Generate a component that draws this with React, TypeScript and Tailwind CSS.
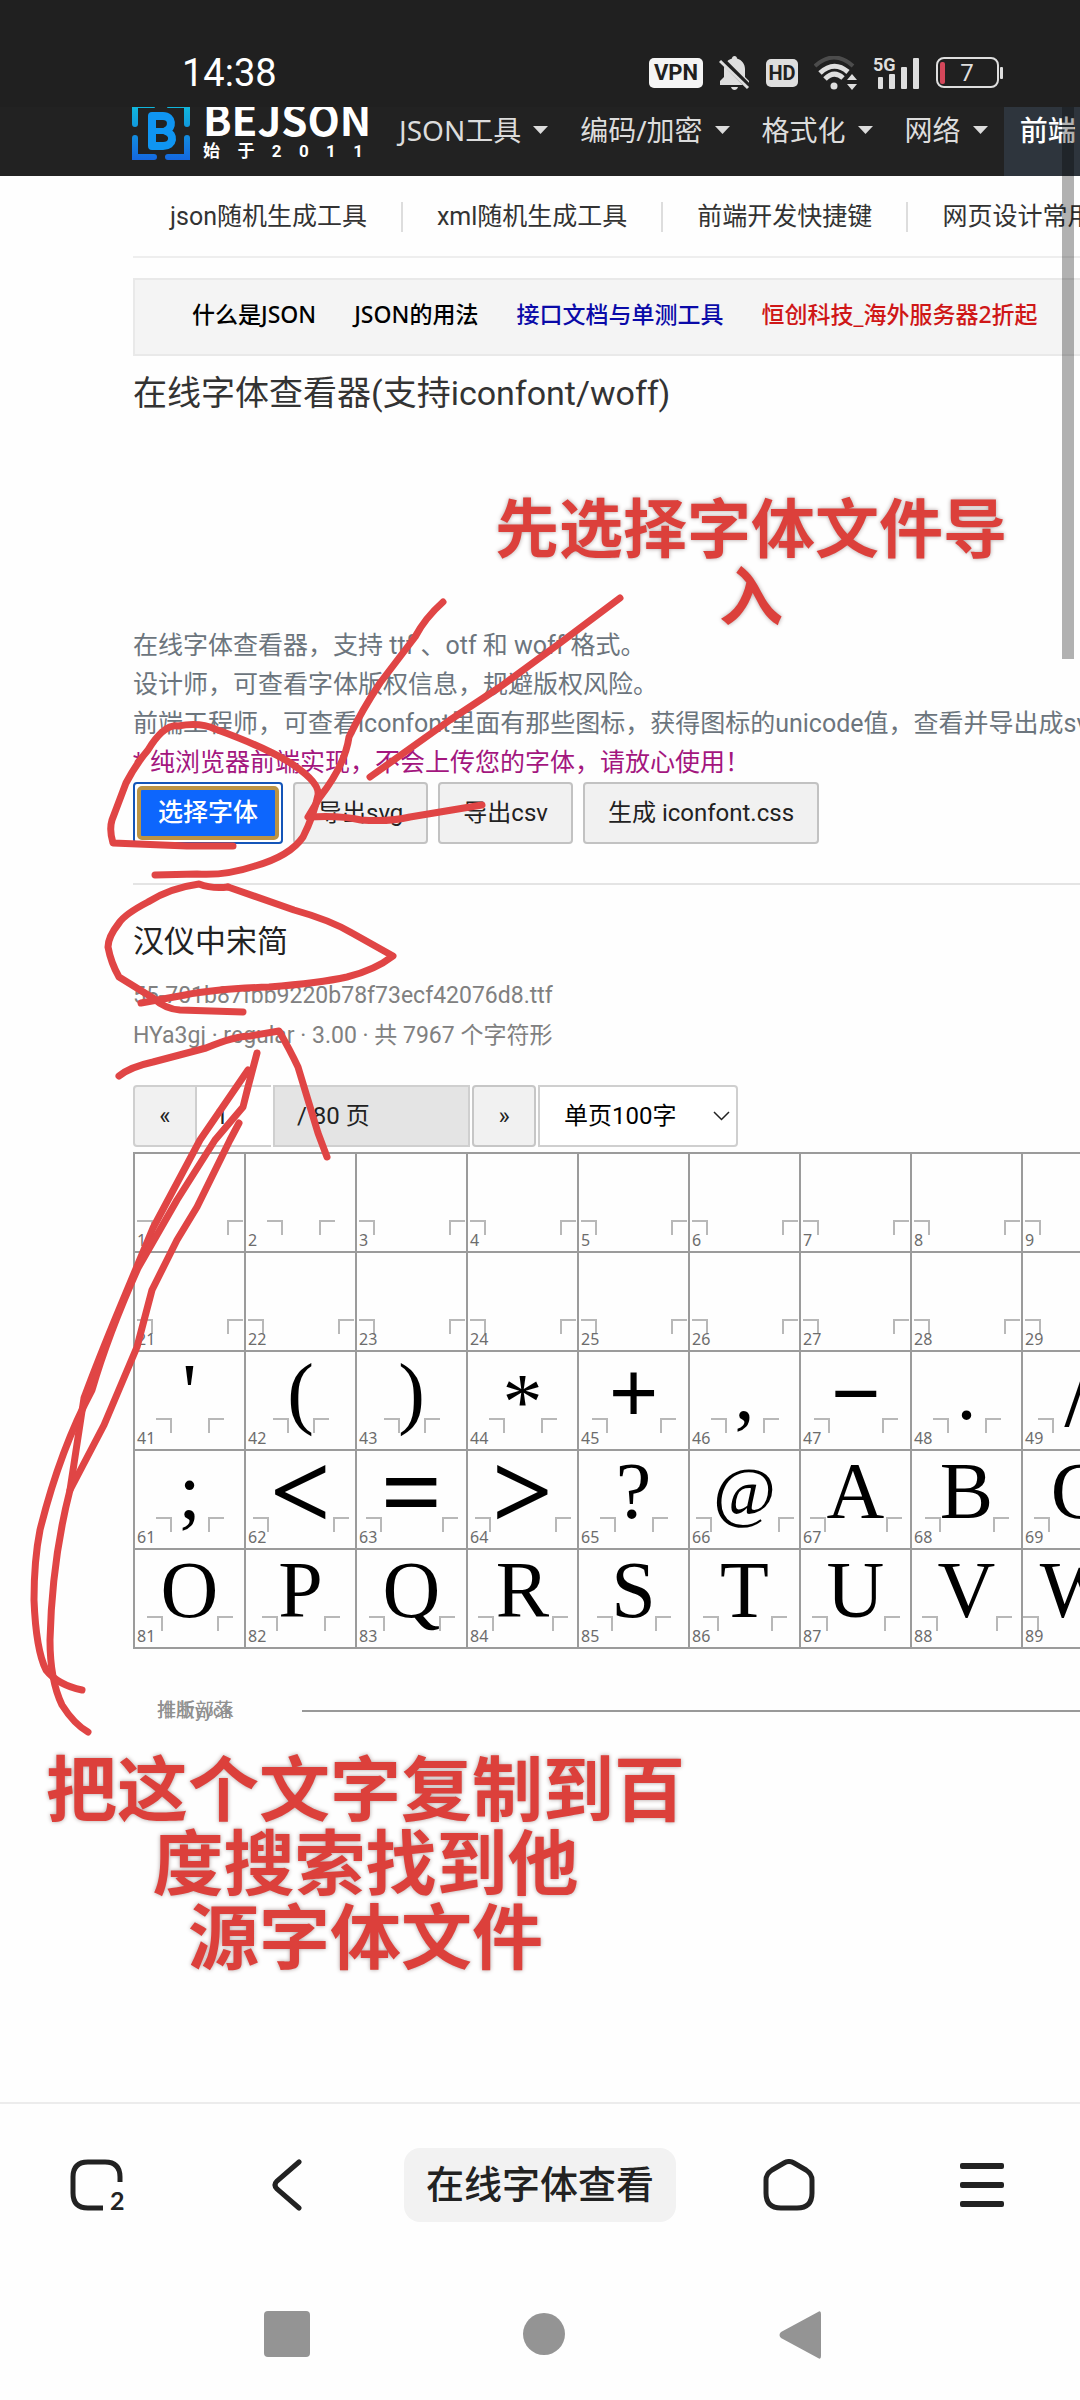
import type { ReactNode } from "react";

interface Glyph {
  id: number;
  char: string;
  /* half of the advance width, where the side marks sit */
  half: number;
  style?: "math" | "wide" | "slash" | "star" | "at";
}

const NAV = ["JSON工具", "编码/加密", "格式化", "网络"];
const SUB_NAV = ["json随机生成工具", "xml随机生成工具", "前端开发快捷键", "网页设计常用色"];

const ROWS: Glyph[][] = [
  [1, 2, 3, 4, 5, 6, 7, 8, 9].map((id) => ({ id, char: "", half: id === 2 ? 19 : 38 })),
  [21, 22, 23, 24, 25, 26, 27, 28, 29].map((id) => ({ id, char: "", half: 38 })),
  [
    { id: 41, char: "'", half: 19 },
    { id: 42, char: "(", half: 13 },
    { id: 43, char: ")", half: 13 },
    { id: 44, char: "*", half: 19, style: "star" },
    { id: 45, char: "+", half: 27, style: "math" },
    { id: 46, char: ",", half: 19 },
    { id: 47, char: "−", half: 27, style: "math" },
    { id: 48, char: ".", half: 19 },
    { id: 49, char: "/", half: 25, style: "slash" },
  ],
  [
    { id: 61, char: ";", half: 19 },
    { id: 62, char: "<", half: 33, style: "wide" },
    { id: 63, char: "=", half: 31, style: "wide" },
    { id: 64, char: ">", half: 33, style: "wide" },
    { id: 65, char: "?", half: 19 },
    { id: 66, char: "@", half: 34, style: "at" },
    { id: 67, char: "A", half: 31 },
    { id: 68, char: "B", half: 27 },
    { id: 69, char: "C", half: 29 },
  ],
  [
    { id: 81, char: "O", half: 28 },
    { id: 82, char: "P", half: 24 },
    { id: 83, char: "Q", half: 28 },
    { id: 84, char: "R", half: 30 },
    { id: 85, char: "S", half: 22 },
    { id: 86, char: "T", half: 27 },
    { id: 87, char: "U", half: 29 },
    { id: 88, char: "V", half: 30 },
    { id: 89, char: "W", half: 40 },
  ],
];

const GLYPH_STYLES = {
  text: "text-[80px] leading-[80px]",
  math: "text-[88px] leading-[84px] font-bold",
  wide: "text-[108px] leading-[82px] font-bold",
  slash: "text-[96px] leading-[84px]",
  star: "text-[80px] leading-[100px]",
  at: "text-[68px] leading-[80px]",
};

const STROKES = [
  "M443 602 Q425 618 415 637 L380 683 Q362 710 349 737 Q345 765 320 797 L308 817 Q340 815 361 820 Q390 822 410 817 L482 805",
  "M620 598 L560 643 L500 687 L450 720 L370 777",
  "M233 846 L187 846 L113 843 Q109 830 112 820 L126 783 Q136 764 148 750 Q164 724 178 726 Q200 722 215 729 Q262 746 289 762 Q320 782 318 795 Q314 815 303 837 Q290 856 255 866 Q225 876 197 874 L155 875",
  "M228 887 Q212 889 199 884 Q170 888 148 902 Q125 914 119 923 Q108 937 108 947 Q111 963 119 977 L153 998 Q165 1009 180 1010 L243 1012",
  "M228 887 Q262 899 294 910 Q330 920 352 933 L393 956 Q375 970 347 977 Q320 983 269 987 Q215 989 185 995 L141 1003",
  "M119 1076 Q130 1067 153 1062 L206 1048 Q235 1036 250 1036 L279 1031 Q290 1050 298 1067 L318 1133 L327 1157",
  "M248 1070 L200 1140 L153 1228 L120 1307 Q98 1360 84 1398 L70 1490",
  "M257 1053 L248 1087 L243 1107 L215 1140 L177 1200 L138 1268 Q108 1335 92 1390 Q60 1450 40 1530 Q34 1560 34 1600 Q36 1650 46 1670 Q58 1685 82 1690",
  "M239 1123 L230 1140 L197 1207 L177 1240 L152 1290 L137 1347 L104 1425 L70 1490 Q52 1560 50 1640 Q50 1680 62 1705 Q74 1724 88 1732",
];

function Caret() {
  return (
    <svg width="15" height="8" viewBox="0 0 15 8" fill="#dcdcdc" aria-hidden="true">
      <path d="M0 0h15L7.500 8z" />
    </svg>
  );
}

function StatusBar() {
  return (
    <div className="flex h-[107px] items-center justify-between bg-[#202020] pt-[38px] pl-[182px] pr-[77px]">
      <span className="font-['Roboto',sans-serif] text-[38px] leading-none text-white">14:38</span>
      <div className="flex items-center gap-4 text-[#dedede]">
        <span className="flex h-[30px] w-[54px] items-center justify-center rounded-[5px] bg-[#f4f4f4] font-['Roboto',sans-serif] text-[22px] leading-none font-bold text-[#202020]">
          VPN
        </span>
        <svg width="31" height="34" viewBox="0 0 31 34" aria-hidden="true">
          <path d="M15.500 0c1.500 0 2.500 1 2.500 2.500C23 4 26 8 26 13v8l4 4v4H1v-4l4-4v-8C5 8 8 4 13 2.500 13 1 14 0 15.500 0z" fill="#dedede" />
          <path d="M12 31h7c-.5 2-2 3-3.500 3S12.500 33 12 31z" fill="#dedede" />
          <path d="M0 1l31 31" stroke="#202020" strokeWidth="6" />
          <path d="M1 5l28 27" stroke="#dedede" strokeWidth="3" />
        </svg>
        <span className="flex h-7 w-8 items-center justify-center rounded-[5px] bg-[#dedede] font-['Roboto',sans-serif] text-[20px] leading-none font-bold text-[#202020]">
          HD
        </span>
        <svg width="43" height="34" viewBox="0 0 43 34" fill="none" aria-hidden="true">
          <path d="M1 10Q20-7 39 10" stroke="#4c4c4c" strokeWidth="4" />
          <path d="M6 17Q20 4 34 16" stroke="#dedede" strokeWidth="5" />
          <path d="M11 23Q20 14 29 22" stroke="#dedede" strokeWidth="5" />
          <circle cx="20" cy="30" r="3.500" fill="#dedede" />
          <path d="M33 24l5-6 5 6zM33 28l5 6 5-6z" fill="#dedede" />
        </svg>
        <svg width="47" height="34" viewBox="0 0 47 34" fill="#dedede" aria-hidden="true">
          <text x="0" y="15" fontSize="18" fontWeight="700" fontFamily="Roboto">5G</text>
          <rect x="5" y="21" width="5" height="12" rx="1" />
          <rect x="16" y="18" width="6" height="15" rx="1" />
          <rect x="28" y="11" width="6" height="22" rx="1" />
          <rect x="40" y="2" width="6" height="31" rx="1" />
        </svg>
        <svg width="67" height="32" viewBox="0 0 67 32" aria-hidden="true">
          <rect x="1" y="1" width="61" height="29" rx="7" fill="none" stroke="#dedede" strokeWidth="2" />
          <rect x="4" y="5" width="5" height="22" rx="2" fill="#d4475a" />
          <rect x="64" y="10" width="3" height="12" rx="1" fill="#dedede" />
          <text x="31" y="24" textAnchor="middle" fontSize="24" fill="#dedede" fontFamily="Roboto">7</text>
        </svg>
      </div>
    </div>
  );
}

function Logo() {
  return (
    <a href="#" className="flex w-[267px] shrink-0 gap-[13px] text-white">
      <svg width="58" height="53" viewBox="0 0 58 53" fill="none" aria-hidden="true">
        <defs>
          <linearGradient id="logo" x1="0" y1="0" x2="0" y2="53" gradientUnits="userSpaceOnUse">
            <stop offset="0" stopColor="#10b7dc" />
            <stop offset="1" stopColor="#1467e0" />
          </linearGradient>
        </defs>
        <g stroke="url(#logo)" strokeWidth="6" strokeLinecap="round">
          <path d="M3-2V17M55-2V17M3 31V50H22M55 31V50H36" />
          <path d="M0 0H22M36 0H58" strokeWidth="2" />
        </g>
        <path d="M20 9h11c10 0 10 12 3 15 9 3 8 15-3 15H20z" stroke="#0f95f2" strokeWidth="8" strokeLinejoin="round" />
        <path d="M20 24h13" stroke="#0f95f2" strokeWidth="6" />
      </svg>
      <span className="flex w-40 flex-col">
        <span className="-mt-3 font-['Noto_Sans_CJK_SC',sans-serif] text-[42px] leading-[45px] font-bold">BEJSON</span>
        <span className="flex justify-between text-[17px] leading-[22px] font-bold">
          {["始", "于", "2", "0", "1", "1"].map((c, i) => (
            <span key={i}>{c}</span>
          ))}
        </span>
      </span>
    </a>
  );
}

function GlyphCell({ glyph }: { glyph: Glyph }) {
  const left = 55 - glyph.half;
  const right = 55 + glyph.half;
  return (
    <td className="border-2 border-[#9b9b9b] p-0">
      <div className="relative h-[97px] w-[109px] text-center">
        <svg className="absolute inset-0" width="109" height="97" fill="none" stroke="#b8b8b8" strokeWidth="2" aria-hidden="true">
          <path d={`M${left - 15} 67H${left}V81M${right + 15} 67H${right}V81`} />
        </svg>
        <span className={`relative block font-['Liberation_Serif',serif] text-black ${GLYPH_STYLES[glyph.style ?? "text"]}`}>
          {glyph.char}
        </span>
        <span className="absolute bottom-[2px] left-[2px] font-['Noto_Sans',sans-serif] text-[16px] leading-[18px] text-[#6c6c6c]">
          {glyph.id}
        </span>
      </div>
    </td>
  );
}

function PlainButton({ children }: { children: ReactNode }) {
  return (
    <button className="h-[62px] rounded-[4px] border-2 border-[#c2c2c2] bg-[#f1f1f1] px-[23px] text-[24px] text-[#222]">
      {children}
    </button>
  );
}

function FontViewer() {
  return (
    <main className="pl-[133px] whitespace-nowrap text-[#333]">
      <nav className="flex h-[82px] items-center border-b-2 border-[#eee] pt-[2px] pl-[3px] text-[25px]">
        {SUB_NAV.map((label, i) => (
          <a
            key={label}
            href="#"
            className={`h-[30px] shrink-0 px-[34px] leading-[30px] ${i > 0 ? "border-l-2 border-[#ddd]" : ""}`}
          >
            {label}
          </a>
        ))}
      </nav>

      <div className="mt-5 flex h-[78px] items-center gap-[38px] border-y-2 border-l-2 border-[#e9e9e9] bg-[#f4f4f4] pb-[6px] pl-[57px] font-['Noto_Sans','Noto_Sans_CJK_SC',sans-serif] text-[23px] font-medium text-black">
        <a href="#">什么是JSON</a>
        <a href="#">JSON的用法</a>
        <a href="#" className="text-[#0a0aa8]">接口文档与单测工具</a>
        <a href="#" className="text-[#cf1717]">恒创科技_海外服务器2折起</a>
      </div>

      <h1 className="mt-3 text-[34px] leading-[50px]">在线字体查看器(支持iconfont/woff)</h1>

      <div className="mt-[208px] text-[25px] leading-[39px] text-[#6c757d]">
        <p>在线字体查看器，支持 ttf 、otf 和 woff 格式。</p>
        <p>设计师，可查看字体版权信息，规避版权风险。</p>
        <p>前端工程师，可查看iconfont里面有那些图标，获得图标的unicode值，查看并导出成svg、css</p>
        <p className="text-[#a3167e]">* 纯浏览器前端实现，不会上传您的字体，请放心使用！</p>
      </div>

      <div className="flex gap-[10px]">
        <button className="h-[62px] rounded-[4px] border-2 border-[#1455b8] bg-white p-[2px] text-[25px] text-white">
          <span className="flex h-full items-center rounded-[5px] border-4 border-[#bb9345] bg-[#0d66fd] px-[17px] font-medium">选择字体</span>
        </button>
        <PlainButton>导出svg</PlainButton>
        <PlainButton>导出csv</PlainButton>
        <PlainButton>生成 iconfont.css</PlainButton>
      </div>

      <hr className="mt-[39px] border-t-2 border-[#e4e4e4]" />

      <h2 className="mt-[34px] text-[31px] leading-[46px] text-[#222]">汉仪中宋简</h2>
      <div className="mt-[11px] text-[23px] leading-[40px] text-[#808080]">
        <p>55-701b87fbb9220b78f73ecf42076d8.ttf</p>
        <p>HYa3gj · regular · 3.00 · 共 7967 个字符形</p>
      </div>

      <form className="mt-[29px] flex h-[62px] text-[24px] text-[#222]">
        <button type="button" className="w-[64px] rounded-l-[4px] border-2 border-[#cfcfcf] bg-[#f1f1f1]">«</button>
        <input aria-label="页码" defaultValue="1" className="w-[74px] border-y-2 border-[#cfcfcf] bg-white px-[18px]" />
        <span className="ml-[2px] flex w-[197px] items-center border-2 border-[#cfcfcf] bg-[#e4e4e4] px-[22px]">/ 80 页</span>
        <button type="button" className="ml-[2px] w-[64px] rounded-[4px] border-2 border-[#c6c6c6] bg-[#f1f1f1]">»</button>
        <span className="relative ml-[2px] w-[200px]">
          <select aria-label="每页字数" className="h-full w-full appearance-none rounded-r-[4px] border-2 border-[#cfcfcf] bg-white px-6 text-black">
            <option>单页100字</option>
          </select>
          <svg className="absolute top-[26px] right-2" width="17" height="10" viewBox="0 0 17 10" fill="none" stroke="#222" strokeWidth="1.500" aria-hidden="true">
            <path d="M1 1l7.500 7.500L16 1" />
          </svg>
        </span>
      </form>

      <table className="mt-[5px] border-collapse">
        <tbody>
          {ROWS.map((row) => (
            <tr key={row[0].id}>
              {row.map((glyph) => (
                <GlyphCell key={glyph.id} glyph={glyph} />
              ))}
            </tr>
          ))}
        </tbody>
      </table>

      <div className="mt-12 flex items-center pl-6 text-[19px] leading-7 text-[#909090]">
        <span className="relative w-[145px] shrink-0">
          排版部落
          <span className="absolute top-0 left-0" aria-hidden="true">推断yyok</span>
        </span>
        <span className="h-[2px] flex-1 bg-[#999]" />
      </div>
    </main>
  );
}

function BrowserBar() {
  return (
    <nav className="grid h-[168px] grid-cols-[194fr_185fr_322fr_176fr_203fr] items-start justify-items-center border-t-2 border-[#ececec] pt-[44px] text-[#222]">
      <button aria-label="标签页" className="flex h-[74px] items-center">
        <svg width="54" height="52" viewBox="0 0 54 52" fill="none" stroke="#222" strokeWidth="5" aria-hidden="true">
          <path d="M50 23V18Q50 3 35 3H18Q3 3 3 18V34Q3 49 18 49H33" />
          <text x="40" y="51" fontSize="25" fontWeight="700" fontFamily="Lato" fill="#222" stroke="none">2</text>
        </svg>
      </button>
      <button aria-label="后退" className="flex h-[74px] items-center">
        <svg width="30" height="52" viewBox="0 0 30 52" fill="none" stroke="#222" strokeWidth="5" strokeLinecap="round" aria-hidden="true">
          <path d="M27 3L5 22Q1 26 5 30L27 49" />
        </svg>
      </button>
      <button className="h-[74px] rounded-[16px] bg-[#f2f2f2] px-[22px] text-[38px] font-medium">在线字体查看</button>
      <button aria-label="主页" className="flex h-[74px] items-center">
        <svg width="52" height="52" viewBox="0 0 52 52" fill="none" stroke="#222" strokeWidth="5" strokeLinejoin="round" aria-hidden="true">
          <path d="M21 4Q26 1 31 4L43 11Q49 15 49 21V34Q49 49 34 49H18Q3 49 3 34V21Q3 15 9 11Z" />
        </svg>
      </button>
      <button aria-label="菜单" className="flex h-[74px] items-center pl-[7px]">
        <svg width="44" height="44" viewBox="0 0 44 44" fill="#222" aria-hidden="true">
          <rect y="0" width="44" height="6" rx="2" />
          <rect y="19" width="44" height="6" rx="2" />
          <rect y="38" width="44" height="6" rx="2" />
        </svg>
      </button>
    </nav>
  );
}

function SystemBar() {
  return (
    <nav className="grid h-[130px] grid-cols-3 justify-items-center pt-[41px] pr-[151px] pl-[159px]">
      <button aria-label="最近任务" className="size-[46px] rounded-[4px] bg-[#949494]" />
      <button aria-label="主屏幕" className="mt-[2px] size-[42px] rounded-full bg-[#949494]" />
      <button aria-label="返回" className="h-[48px]">
        <svg width="43" height="48" viewBox="0 0 43 48" fill="#949494" aria-hidden="true">
          <path d="M39 1Q42-1 42 3V45Q42 49 39 47L2 27Q-1 24 2 21Z" />
        </svg>
      </button>
    </nav>
  );
}

export default function App() {
  return (
    <div className="relative flex min-h-screen flex-col overflow-hidden bg-[#fefefe] font-['Roboto','Noto_Sans_CJK_SC',sans-serif]">
      <StatusBar />
      <header className="flex h-[69px] overflow-hidden bg-[#222] pl-[132px] whitespace-nowrap">
        <Logo />
        <nav className="flex font-['Noto_Sans','Noto_Sans_CJK_SC',sans-serif] text-[28px] leading-[46px] text-[#dcdcdc]">
          {NAV.map((label) => (
            <a key={label} href="#" className="mr-8 flex h-[46px] items-center gap-3">
              {label}
              <Caret />
            </a>
          ))}
          <a href="#" className="-ml-4 bg-[#2e353d] px-4 font-medium text-white">前端</a>
        </nav>
      </header>
      <FontViewer />
      <div className="mt-auto">
        <BrowserBar />
        <SystemBar />
      </div>

      <div className="absolute top-[107px] right-[6px] h-[552px] w-3 bg-black/30" />

      {/* Hand-drawn notes over the page */}
      <svg
        className="pointer-events-none absolute top-0 left-0"
        width="1080"
        height="2400"
        viewBox="0 0 1080 2400"
        fill="none"
        stroke="#e04545"
        strokeWidth="7"
        strokeLinecap="round"
        strokeLinejoin="round"
        aria-hidden="true"
      >
        {STROKES.map((d) => (
          <path key={d} d={d} />
        ))}
      </svg>
      <p className="absolute top-[497px] left-[495px] text-center text-[64px] leading-[68px] font-bold whitespace-nowrap text-[#dc403b] text-shadow-[0_0_4px_#b0a0a0]">
        先选择字体文件导
        <br />入
      </p>
      <p className="absolute top-[1754px] left-[46px] text-center text-[71px] leading-[74px] font-bold whitespace-nowrap text-[#dc403b] text-shadow-[0_0_4px_#b0a0a0]">
        把这个文字复制到百
        <br />
        度搜索找到他
        <br />
        源字体文件
      </p>
    </div>
  );
}
